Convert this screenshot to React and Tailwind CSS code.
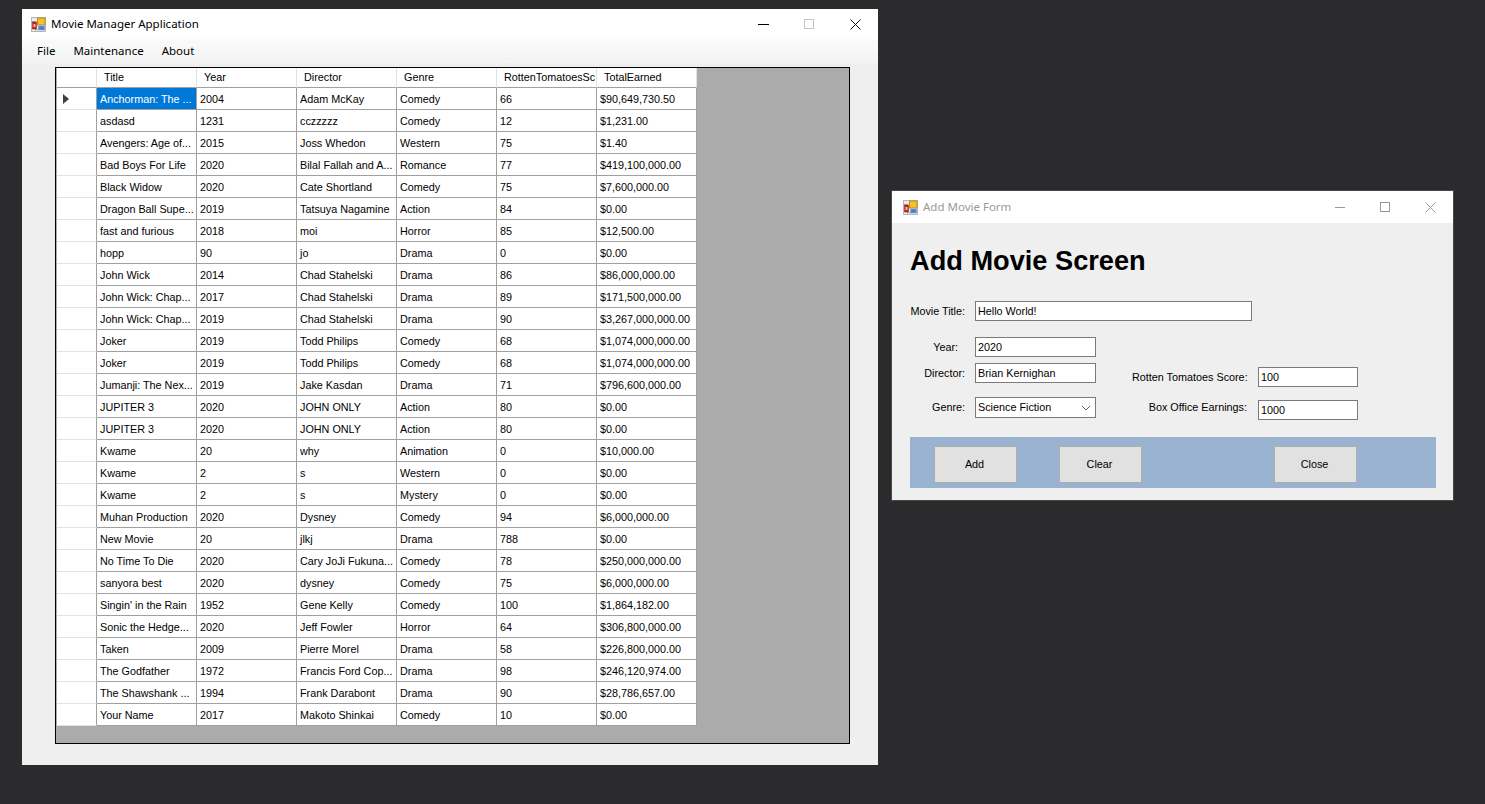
const movies = [
  ["Anchorman: The ...", "2004", "Adam McKay", "Comedy", "66", "$90,649,730.50"],
  ["asdasd", "1231", "cczzzzz", "Comedy", "12", "$1,231.00"],
  ["Avengers: Age of...", "2015", "Joss Whedon", "Western", "75", "$1.40"],
  ["Bad Boys For Life", "2020", "Bilal Fallah and A...", "Romance", "77", "$419,100,000.00"],
  ["Black Widow", "2020", "Cate Shortland", "Comedy", "75", "$7,600,000.00"],
  ["Dragon Ball Supe...", "2019", "Tatsuya Nagamine", "Action", "84", "$0.00"],
  ["fast and furious", "2018", "moi", "Horror", "85", "$12,500.00"],
  ["hopp", "90", "jo", "Drama", "0", "$0.00"],
  ["John Wick", "2014", "Chad Stahelski", "Drama", "86", "$86,000,000.00"],
  ["John Wick: Chap...", "2017", "Chad Stahelski", "Drama", "89", "$171,500,000.00"],
  ["John Wick: Chap...", "2019", "Chad Stahelski", "Drama", "90", "$3,267,000,000.00"],
  ["Joker", "2019", "Todd Philips", "Comedy", "68", "$1,074,000,000.00"],
  ["Joker", "2019", "Todd Philips", "Comedy", "68", "$1,074,000,000.00"],
  ["Jumanji: The Nex...", "2019", "Jake Kasdan", "Drama", "71", "$796,600,000.00"],
  ["JUPITER 3", "2020", "JOHN ONLY", "Action", "80", "$0.00"],
  ["JUPITER 3", "2020", "JOHN ONLY", "Action", "80", "$0.00"],
  ["Kwame", "20", "why", "Animation", "0", "$10,000.00"],
  ["Kwame", "2", "s", "Western", "0", "$0.00"],
  ["Kwame", "2", "s", "Mystery", "0", "$0.00"],
  ["Muhan Production", "2020", "Dysney", "Comedy", "94", "$6,000,000.00"],
  ["New Movie", "20", "jlkj", "Drama", "788", "$0.00"],
  ["No Time To Die", "2020", "Cary JoJi Fukuna...", "Comedy", "78", "$250,000,000.00"],
  ["sanyora best", "2020", "dysney", "Comedy", "75", "$6,000,000.00"],
  ["Singin' in the Rain", "1952", "Gene Kelly", "Comedy", "100", "$1,864,182.00"],
  ["Sonic the Hedge...", "2020", "Jeff Fowler", "Horror", "64", "$306,800,000.00"],
  ["Taken", "2009", "Pierre Morel", "Drama", "58", "$226,800,000.00"],
  ["The Godfather", "1972", "Francis Ford Cop...", "Drama", "98", "$246,120,974.00"],
  ["The Shawshank ...", "1994", "Frank Darabont", "Drama", "90", "$28,786,657.00"],
  ["Your Name", "2017", "Makoto Shinkai", "Comedy", "10", "$0.00"],
];

const headers = ["Title", "Year", "Director", "Genre", "RottenTomatoesSc", "TotalEarned"];

const AppIcon = () => (
  <svg width="15" height="15" viewBox="0 0 15 15" className="shrink-0">
    <rect x="0" y="0" width="15" height="15" fill="#ececec" />
    <path d="M0.5 0.5 H14.5 V14.5 H0.5 Z M0.5 4.5 H5 M4.5 4.5 V14.5 M5 12.5 H14.5" stroke="#b4b4b4" fill="none" />
    <rect x="1.5" y="5" width="4" height="7" fill="#c8201c" stroke="#8f1512" strokeWidth="0.5" />
    <rect x="2.5" y="7" width="2" height="3" fill="#f2b8a8" />
    <rect x="6.5" y="1" width="7.5" height="7" fill="#f2c230" stroke="#b98d14" />
    <rect x="7.5" y="9" width="6" height="4" fill="#4a7fd8" stroke="#7ea5e6" strokeWidth="0.6" />
  </svg>
);

const GridRow = ({ row, index }) => (
  <div className="flex h-[22px]">
    <div className="w-[40px] shrink-0 flex items-center pl-[6px] bg-white border-r border-b border-r-[#a0a0a0] border-b-[#e3e3e3]">
      {index === 0 && (
        <svg width="6" height="10" viewBox="0 0 6 10"><path d="M0 0 L6 5 L0 10 Z" fill="#404040" /></svg>
      )}
    </div>
    {row.map((cell, i) => (
      <div
        key={i}
        className={`w-[100px] shrink-0 flex items-center pl-[3px] pt-[2px] border-r border-b border-[#a0a0a0] whitespace-nowrap overflow-hidden ${
          index === 0 && i === 0 ? "bg-[#0078d7] text-white" : "bg-white text-black"
        }`}
      >
        {cell}
      </div>
    ))}
  </div>
);

const MainWindow = () => (
  <div className="absolute left-[22px] top-[9px] w-[856px] h-[756px] bg-[#efefef] flex flex-col">
    <div className="h-[30px] bg-white flex items-center pl-[9px] shrink-0">
      <AppIcon />
      <span className="ml-[5px] text-[11.5px] text-black font-['Noto_Sans',sans-serif]">Movie Manager Application</span>
      <div className="ml-auto flex items-center h-full">
        <div className="w-[46px] flex justify-center"><div className="w-[11px] h-px bg-black" /></div>
        <div className="w-[46px] flex justify-center"><div className="w-[10px] h-[10px] border border-[#c4c4c4]" /></div>
        <div className="w-[46px] flex justify-center">
          <svg width="11" height="11" viewBox="0 0 11 11"><path d="M0.5 0.5 L10.5 10.5 M10.5 0.5 L0.5 10.5" stroke="#111" fill="none" /></svg>
        </div>
      </div>
    </div>
    <div className="h-[24px] shrink-0 bg-gradient-to-b from-[#fbfbfb] to-[#f3f3f3] flex items-center pl-[15px] gap-[18px] text-[11.5px] text-black font-['Noto_Sans',sans-serif]">
      <span>File</span>
      <span>Maintenance</span>
      <span>About</span>
    </div>
    <div className="ml-[33px] mt-[4px] w-[795px] h-[677px] border border-black bg-[#ababab] pl-px text-[10.8px] font-['Liberation_Sans',sans-serif]">
      <div className="flex h-[20px]">
        <div className="w-[40px] bg-white border-r border-b border-r-[#e3e3e3] border-b-[#a0a0a0]" />
        {headers.map((h) => (
          <div
            key={h}
            className="w-[100px] shrink-0 flex items-center pl-[7px] bg-white border-r border-b border-r-[#e3e3e3] border-b-[#a0a0a0] whitespace-nowrap overflow-hidden text-black"
          >
            {h}
          </div>
        ))}
      </div>
      {movies.map((row, i) => (
        <GridRow key={i} row={row} index={i} />
      ))}
    </div>
  </div>
);

const Field = ({ value, className }) => (
  <div className={`h-[20px] bg-white border border-[#7a7a7a] flex items-center pl-[2px] text-black ${className}`}>
    {value}
  </div>
);

const FormButton = ({ label, className }) => (
  <div className={`w-[83px] h-[37px] pr-[2px] bg-[#e1e1e1] border border-[#adadad] flex items-center justify-center text-black ${className}`}>
    {label}
  </div>
);

const AddMovieForm = () => (
  <div className="absolute left-[891px] top-[190px] w-[563px] h-[311px] bg-[#efefef] border border-[#48484a] flex flex-col text-[10.8px] font-['Liberation_Sans',sans-serif]">
    <div className="h-[32px] bg-white flex items-center pl-[11px] shrink-0">
      <AppIcon />
      <span className="ml-[5px] text-[11.5px] text-[#9a9a9a] font-['Noto_Sans',sans-serif]">Add Movie Form</span>
      <div className="ml-auto flex items-center h-full">
        <div className="w-[45px] flex justify-center"><div className="w-[10px] h-px bg-[#999999]" /></div>
        <div className="w-[45px] flex justify-center"><div className="w-[10px] h-[10px] border border-[#999999]" /></div>
        <div className="w-[46px] flex justify-center">
          <svg width="11" height="11" viewBox="0 0 11 11"><path d="M0.5 0.5 L10.5 10.5 M10.5 0.5 L0.5 10.5" stroke="#999999" fill="none" /></svg>
        </div>
      </div>
    </div>
    <div className="flex flex-col pl-[18px] pr-[17px] flex-1">
      <h1 className="mt-[22px] h-[32px] leading-[32px] text-[27.2px] font-bold text-black">Add Movie Screen</h1>
      <div className="mt-[24px] flex items-center h-[20px]">
        <span className="w-[55px] text-right whitespace-nowrap text-black">Movie Title:</span>
        <Field value="Hello World!" className="ml-[10px] w-[277px]" />
      </div>
      <div className="mt-[16px] flex">
        <div className="flex flex-col w-[186px]">
          <div className="flex items-center h-[20px]">
            <span className="w-[48px] text-right text-black">Year:</span>
            <Field value="2020" className="ml-[17px] w-[121px]" />
          </div>
          <div className="flex items-center h-[20px] mt-[6px]">
            <span className="w-[55px] text-right text-black">Director:</span>
            <Field value="Brian Kernighan" className="ml-[10px] w-[121px]" />
          </div>
          <div className="flex items-center h-[21px] mt-[14px]">
            <span className="w-[55px] text-right text-black">Genre:</span>
            <div className="ml-[10px] w-[121px] h-[21px] bg-white border border-[#7a7a7a] flex items-center justify-between pl-[2px] pr-[4px] text-black">
              Science Fiction
              <svg width="10" height="6" viewBox="0 0 10 6"><path d="M1 1 L5 5 L9 1" stroke="#606060" fill="none" /></svg>
            </div>
          </div>
        </div>
        <div className="flex flex-col ml-[36px] mt-[30px]">
          <div className="flex items-center h-[20px]">
            <span className="w-[115px] text-right whitespace-nowrap text-black">Rotten Tomatoes Score:</span>
            <Field value="100" className="ml-[11px] w-[100px]" />
          </div>
          <div className="flex items-center h-[20px] mt-[13px]">
            <span className="w-[115px] mb-[6px] text-right whitespace-nowrap text-black">Box Office Earnings:</span>
            <Field value="1000" className="ml-[11px] w-[100px]" />
          </div>
        </div>
      </div>
      <div className="mt-[17px] h-[51px] pt-[4px] bg-[#9ab3d0] flex items-center pl-[24px]">
        <FormButton label="Add" />
        <FormButton label="Clear" className="ml-[42px]" />
        <FormButton label="Close" className="ml-[132px]" />
      </div>
    </div>
  </div>
);

export default function App() {
  return (
    <div className="relative w-[1485px] h-[804px] bg-[#2b2b2d] overflow-hidden">
      <MainWindow />
      <AddMovieForm />
    </div>
  );
}
